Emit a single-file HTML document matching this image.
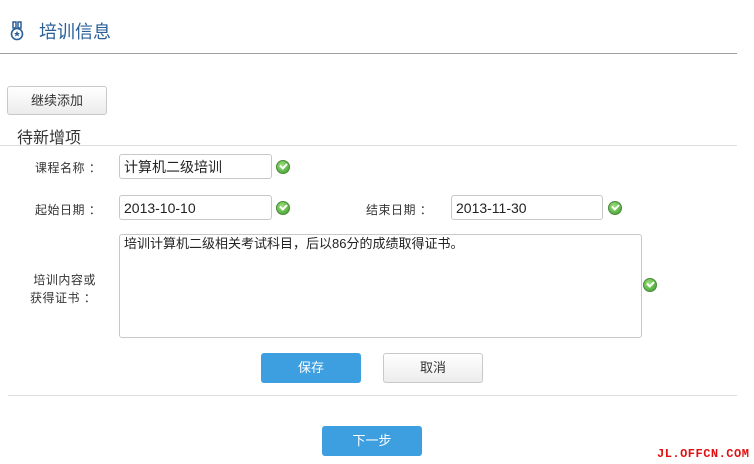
<!DOCTYPE html>
<html><head><meta charset="utf-8"><style>
*{margin:0;padding:0;box-sizing:border-box}
body{width:754px;height:464px;background:#fff;position:relative;overflow:hidden;font-family:"Liberation Sans","Noto Sans CJK SC",sans-serif;color:#333}
.a{position:absolute}
.lbl{font-size:12px;color:#333;letter-spacing:0.5px}
.inp{border:1px solid #c8c8c8;border-radius:3px;background:#fff;font-size:14px;padding-left:4px;line-height:24px;color:#222}
.chk{width:14px;height:14px;border-radius:50%;background:radial-gradient(circle at 40% 35%,#9be07a,#3a9a2a);border:1px solid #4a8a3a}
.chk:after{content:"";position:absolute;left:3px;top:2px;width:5px;height:3px;border-left:2px solid #fff;border-bottom:2px solid #fff;transform:rotate(-45deg)}
.btn{border:1px solid #c9c9c9;border-radius:3px;background:linear-gradient(#fff,#ececec);font-size:13px;text-align:center;color:#333}
.blue{background:#3d9ee0;border-radius:3px;color:#fff;font-size:13px;text-align:center}
</style></head><body>
<svg class="a" style="left:9px;top:21px" width="16" height="20" viewBox="0 0 16 20"><path d="M4 1h3v6H4zM9 1h3v6H9z" fill="none" stroke="#2a5f98" stroke-width="1.5"/><circle cx="8" cy="13" r="5.5" fill="none" stroke="#2a5f98" stroke-width="1.6"/><path d="M8 10l1 2h2l-1.6 1.3.6 2.2L8 14.3 6 15.5l.6-2.2L5 12h2z" fill="#2a5f98"/></svg>
<div class="a" style="left:39px;top:18px;font-size:18px;color:#2a5f98">培训信息</div>
<div class="a" style="left:0;top:53px;width:737px;height:1px;background:#a0a0a0"></div>
<div class="a btn" style="left:7px;top:86px;width:100px;height:29px;line-height:27px">继续添加</div>
<div class="a" style="left:17px;top:124px;font-size:16px;color:#333">待新增项</div>
<div class="a" style="left:0;top:145px;width:737px;height:1px;background:#ddd"></div>
<div class="a lbl" style="left:35px;top:159px">课程名称 ：</div>
<div class="a inp" style="left:119px;top:154px;width:153px;height:25px">计算机二级培训</div>
<div class="a chk" style="left:276px;top:160px"></div>
<div class="a lbl" style="left:35px;top:201px">起始日期 ：</div>
<div class="a inp" style="left:119px;top:195px;width:153px;height:25px">2013-10-10</div>
<div class="a chk" style="left:276px;top:201px"></div>
<div class="a lbl" style="left:366px;top:201px">结束日期 ：</div>
<div class="a inp" style="left:451px;top:195px;width:152px;height:25px">2013-11-30</div>
<div class="a chk" style="left:608px;top:201px"></div>
<div class="a lbl" style="left:33px;top:271px;line-height:18px;text-align:center">培训内容或<br><span style="margin-left:-3px">获得证书 ：</span></div>
<div class="a inp" style="left:119px;top:234px;width:523px;height:104px;font-size:13px;line-height:16px;padding-top:1px">培训计算机二级相关考试科目，后以86分的成绩取得证书。</div>
<div class="a chk" style="left:643px;top:278px"></div>
<div class="a blue" style="left:261px;top:353px;width:100px;height:30px;line-height:30px">保存</div>
<div class="a btn" style="left:383px;top:353px;width:100px;height:30px;line-height:28px">取消</div>
<div class="a" style="left:8px;top:395px;width:729px;height:1px;background:#ddd"></div>
<div class="a blue" style="left:322px;top:426px;width:100px;height:30px;line-height:30px">下一步</div>
<div class="a" style="left:657px;top:447px;font-size:12px;font-weight:bold;color:#e01010;letter-spacing:0.5px;font-family:'Liberation Mono',monospace">JL.OFFCN.COM</div>
</body></html>
